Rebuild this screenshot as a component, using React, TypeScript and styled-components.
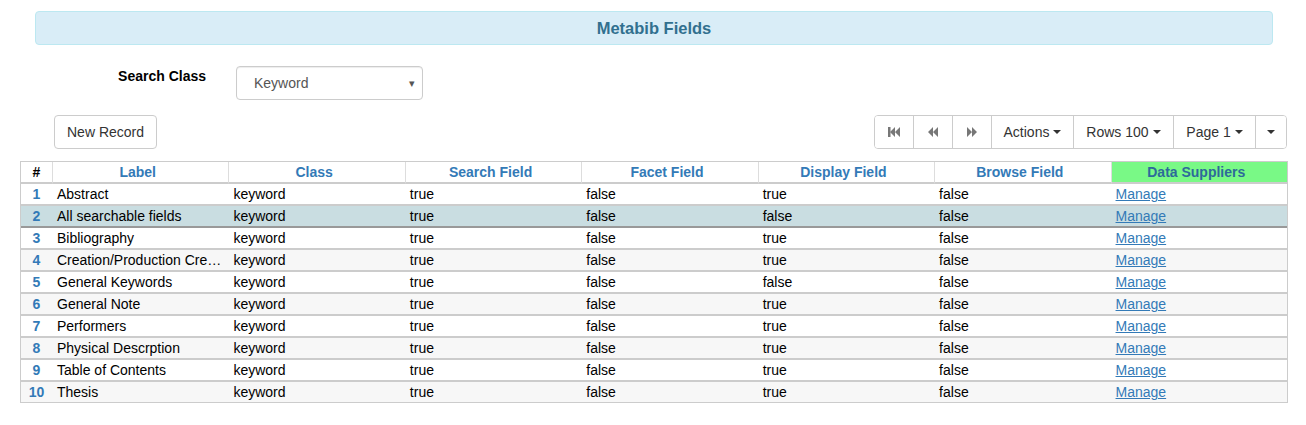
import React, { useState } from "react";
import styled, { createGlobalStyle } from "styled-components";

const GlobalStyle = createGlobalStyle`
  body {
    margin: 0;
    background: #fff;
    font-family: "Liberation Sans", Arial, sans-serif;
    font-size: 14px;
    color: #333;
  }
`;

const COLUMNS = [
  "Label",
  "Class",
  "Search Field",
  "Facet Field",
  "Display Field",
  "Browse Field",
];

const ROWS = [
  ["Abstract", "keyword", "true", "false", "true", "false"],
  ["All searchable fields", "keyword", "true", "false", "false", "false"],
  ["Bibliography", "keyword", "true", "false", "true", "false"],
  ["Creation/Production Credits", "keyword", "true", "false", "true", "false"],
  ["General Keywords", "keyword", "true", "false", "false", "false"],
  ["General Note", "keyword", "true", "false", "true", "false"],
  ["Performers", "keyword", "true", "false", "true", "false"],
  ["Physical Descrption", "keyword", "true", "false", "true", "false"],
  ["Table of Contents", "keyword", "true", "false", "true", "false"],
  ["Thesis", "keyword", "true", "false", "true", "false"],
];

function NavIcon(props: { kind: "first" | "prev" | "next" }) {
  return (
    <svg width="14" height="12" viewBox="0 0 14 12">
      {props.kind === "first" && (
        <>
          <rect x="1" y="1" width="2.5" height="10" fill="#777" />
          <path d="M3 6 L8 1 V11 Z M8 6 L13 1 V11 Z" fill="#777" />
        </>
      )}
      {props.kind === "prev" && <path d="M2 6 L7 1 V11 Z M7 6 L12 1 V11 Z" fill="#777" />}
      {props.kind === "next" && <path d="M2 1 L7 6 L2 11 Z M7 1 L12 6 L7 11 Z" fill="#777" />}
    </svg>
  );
}

export default function App() {
  const [selected, setSelected] = useState(1);

  return (
    <Page>
      <GlobalStyle />
      <Banner>Metabib Fields</Banner>

      <SearchRow>
        <FieldLabel>Search Class</FieldLabel>
        <SelectBox>
          <span>Keyword</span>
          <SelectArrow>▾</SelectArrow>
        </SelectBox>
      </SearchRow>

      <Toolbar>
        <Button>New Record</Button>
        <ButtonGroup>
          <GroupButton $w={38}>
            <NavIcon kind="first" />
          </GroupButton>
          <GroupButton $w={39}>
            <NavIcon kind="prev" />
          </GroupButton>
          <GroupButton $w={39}>
            <NavIcon kind="next" />
          </GroupButton>
          <GroupButton $w={82}>
            Actions <Caret />
          </GroupButton>
          <GroupButton $w={100}>
            Rows 100 <Caret />
          </GroupButton>
          <GroupButton $w={82}>
            Page 1 <Caret />
          </GroupButton>
          <GroupButton $w={31}>
            <Caret />
          </GroupButton>
        </ButtonGroup>
      </Toolbar>

      <Grid>
        <colgroup>
          <col style={{ width: 31 }} />
          {COLUMNS.map((c) => (
            <col key={c} />
          ))}
          <col />
        </colgroup>
        <thead>
          <tr>
            <HeadCell $plain>#</HeadCell>
            {COLUMNS.map((c) => (
              <HeadCell key={c}>{c}</HeadCell>
            ))}
            <HeadCell $green>Data Suppliers</HeadCell>
          </tr>
        </thead>
        <tbody>
          {ROWS.map((row, i) => (
            <Row
              key={i}
              $striped={i % 2 === 1}
              $selected={i === selected}
              $last={i === ROWS.length - 1}
              onClick={() => setSelected(i)}
            >
              <NumCell>{i + 1}</NumCell>
              {row.map((v, j) => (
                <Cell key={j}>{v}</Cell>
              ))}
              <Cell>
                <ManageLink href="#">Manage</ManageLink>
              </Cell>
            </Row>
          ))}
        </tbody>
      </Grid>
    </Page>
  );
}

const Page = styled.div`
  padding: 11px 18px 0 20px;
`;

const Banner = styled.div`
  margin: 0 15px;
  height: 32px;
  display: flex;
  align-items: center;
  justify-content: center;
  background: #d9edf7;
  border: 1px solid #bce8f1;
  border-radius: 4px;
  color: #31708f;
  font-weight: bold;
  font-size: 16.5px;
`;

const SearchRow = styled.div`
  display: flex;
  align-items: flex-start;
  gap: 30px;
  margin-top: 21px;
`;

const FieldLabel = styled.label`
  width: 186px;
  text-align: right;
  font-weight: bold;
  color: #000;
  line-height: 20px;
`;

const SelectBox = styled.div`
  height: 32px;
  box-sizing: content-box;
  display: flex;
  align-items: center;
  justify-content: space-between;
  padding: 0 0 0 17px;
  width: 168px;
  border: 1px solid #ccc;
  border-radius: 4px;
  color: #555;
  box-shadow: inset 0 1px 1px rgba(0, 0, 0, 0.075);
`;

const SelectArrow = styled.span`
  font-size: 11px;
  color: #555;
  margin-right: 7px;
`;

const Toolbar = styled.div`
  display: flex;
  justify-content: space-between;
  align-items: center;
  margin-top: 15px;
  padding: 0 1px 0 34px;
`;

const Button = styled.button`
  height: 34px;
  padding: 0 12px;
  font-family: inherit;
  font-size: 14px;
  color: #333;
  background: #fff;
  border: 1px solid #ccc;
  border-radius: 4px;
`;

const ButtonGroup = styled.div`
  display: flex;
  border: 1px solid #ccc;
  border-radius: 4px;
  overflow: hidden;
`;

const GroupButton = styled.button<{ $w: number }>`
  box-sizing: border-box;
  width: ${(p) => p.$w}px;
  height: 32px;
  display: flex;
  align-items: center;
  justify-content: center;
  gap: 4px;
  padding: 0;
  font-family: inherit;
  font-size: 14px;
  color: #333;
  background: #fff;
  border: none;
  border-left: 1px solid #ccc;
  &:first-child {
    border-left: none;
  }
`;

const Caret = styled.span`
  display: inline-block;
  width: 0;
  height: 0;
  border-top: 4px solid #333;
  border-left: 4px solid transparent;
  border-right: 4px solid transparent;
`;

const Grid = styled.table`
  margin-top: 12px;
  width: 100%;
  table-layout: fixed;
  border-collapse: separate;
  border-spacing: 0;
  border: 1px solid #ccc;
`;

const HeadCell = styled.th<{ $plain?: boolean; $green?: boolean }>`
  height: 20px;
  padding: 0 ${(p) => (p.$plain ? "0" : "6px")} 0 0;
  font-size: 14px;
  font-weight: bold;
  text-align: center;
  color: ${(p) => (p.$plain ? "#000" : p.$green ? "#2d6a9a" : "#337ab7")};
  background: ${(p) => (p.$green ? "#79f986" : "#fff")};
  border-left: 1px solid #ddd;
  border-bottom: 2px solid #ccc;
  &:first-child {
    border-left: none;
  }
`;

const Row = styled.tr<{ $striped: boolean; $selected: boolean; $last: boolean }>`
  background: ${(p) => (p.$selected ? "#c9dde1" : p.$striped ? "#f7f7f7" : "#fff")};
  & > td {
    border-bottom: ${(p) => (p.$last ? "none" : p.$selected ? "2px solid #999" : "2px solid #ccc")};
  }
`;

const Cell = styled.td`
  height: 20px;
  padding: 0 0 0 5px;
  white-space: nowrap;
  overflow: hidden;
  text-overflow: ellipsis;
  color: #000;
`;

const NumCell = styled.td`
  height: 20px;
  padding: 0;
  text-align: center;
  font-weight: bold;
  color: #337ab7;
`;

const ManageLink = styled.a`
  color: #337ab7;
  text-decoration: underline;
`;
